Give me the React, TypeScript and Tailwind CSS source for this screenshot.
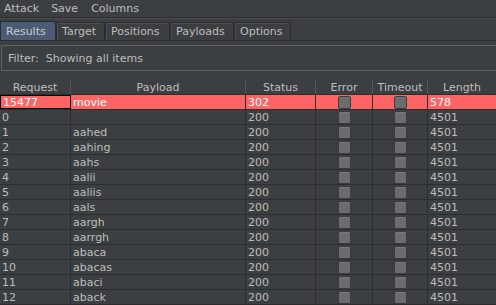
import React from "react";

const rows: [string, string, string, string][] = [
  ["0", "", "200", "4501"],
  ["1", "aahed", "200", "4501"],
  ["2", "aahing", "200", "4501"],
  ["3", "aahs", "200", "4501"],
  ["4", "aalii", "200", "4501"],
  ["5", "aaliis", "200", "4501"],
  ["6", "aals", "200", "4501"],
  ["7", "aargh", "200", "4501"],
  ["8", "aarrgh", "200", "4501"],
  ["9", "abaca", "200", "4501"],
  ["10", "abacas", "200", "4501"],
  ["11", "abaci", "200", "4501"],
  ["12", "aback", "200", "4501"],
];

const Check = () => (
  <div className="w-[13px] h-[13px] rounded-[2px] bg-[#6a6c6e] border border-[#3a3c3e] shadow-[inset_0_1px_0_#777a7c]" />
);

const widths = ["w-[71px]", "w-[175px]", "w-[70px]", "w-[57px]", "w-[55px]", "flex-1"];

export default function App() {
  return (
    <div
      className="w-[496px] h-[305px] overflow-hidden bg-[#3c3f41] text-[#bdbdbd] text-[11px] leading-none"
      style={{ fontFamily: '"DejaVu Sans", sans-serif' }}
    >
      {/* menu */}
      <div className="h-[18px] flex items-center border-b border-[#2b2d2e] pl-[4px]">
        <span>Attack</span>
        <span className="ml-[12px]">Save</span>
        <span className="ml-[13px]">Columns</span>
      </div>
      <div className="h-px bg-[#4a4d4f]" />
      {/* tabs */}
      <div className="h-[22px] flex items-end border-b border-[#2b2d2e]">
        <div className="w-[56px] h-[19px] flex items-center pl-[5px] bg-[#4b5b76] border border-[#2b2d2e] border-b-0 rounded-tr-[3px] text-[#c8c8c8]">
          Results
        </div>
        {[
          ["Target", "w-[49px]"],
          ["Positions", "w-[65px]"],
          ["Payloads", "w-[64px]"],
          ["Options", "w-[57px]"],
        ].map(([t, w]) => (
          <div
            key={t}
            className={`${w} h-[18px] flex items-center pl-[5px] border border-[#2b2d2e] border-b-0 rounded-tr-[3px] shadow-[inset_1px_1px_0_#4e5153]`}
          >
            {t}
          </div>
        ))}
      </div>
      {/* filter */}
      <div className="mt-[4px] ml-[1px] h-[26px] border-y border-l border-[#5e6163] flex items-center pl-[6px]">
        Filter:&nbsp; Showing all items
      </div>
      {/* table */}
      <div className="mt-[9px]">
        <div className="flex h-[15px] border-b border-[#2b2d2e]">
          {["Request", "Payload", "Status", "Error", "Timeout", "Length"].map((h, i) => (
            <div
              key={h}
              className={`${widths[i]} flex items-center justify-center ${i < 5 ? "border-r border-[#55585a]" : ""}`}
            >
              {h}
            </div>
          ))}
        </div>
        {/* highlighted row */}
        <div className="flex h-[15px] border-b border-[#2b2d2e] bg-[#ff6464] text-white">
          <div className="w-[71px] flex items-center pl-[2px] border border-black">15477</div>
          <div className="w-[175px] flex items-center pl-[2px] border-r border-[#2b2d2e]">movie</div>
          <div className="w-[70px] flex items-center pl-[2px] border-r border-[#2b2d2e]">302</div>
          <div className="w-[57px] flex items-center justify-center border-r border-[#2b2d2e]">
            <Check />
          </div>
          <div className="w-[55px] flex items-center justify-center border-r border-[#2b2d2e]">
            <Check />
          </div>
          <div className="flex-1 flex items-center pl-[2px]">578</div>
        </div>
        {rows.map((r) => (
          <div key={r[0]} className="flex h-[15px] border-b border-[#2b2d2e]">
            <div className="w-[71px] flex items-center pl-[2px] border-r border-[#2b2d2e]">{r[0]}</div>
            <div className="w-[175px] flex items-center pl-[2px] border-r border-[#2b2d2e]">{r[1]}</div>
            <div className="w-[70px] flex items-center pl-[2px] border-r border-[#2b2d2e]">{r[2]}</div>
            <div className="w-[57px] flex items-center justify-center border-r border-[#2b2d2e]">
              <Check />
            </div>
            <div className="w-[55px] flex items-center justify-center border-r border-[#2b2d2e]">
              <Check />
            </div>
            <div className="flex-1 flex items-center pl-[2px]">{r[3]}</div>
          </div>
        ))}
      </div>
    </div>
  );
}
